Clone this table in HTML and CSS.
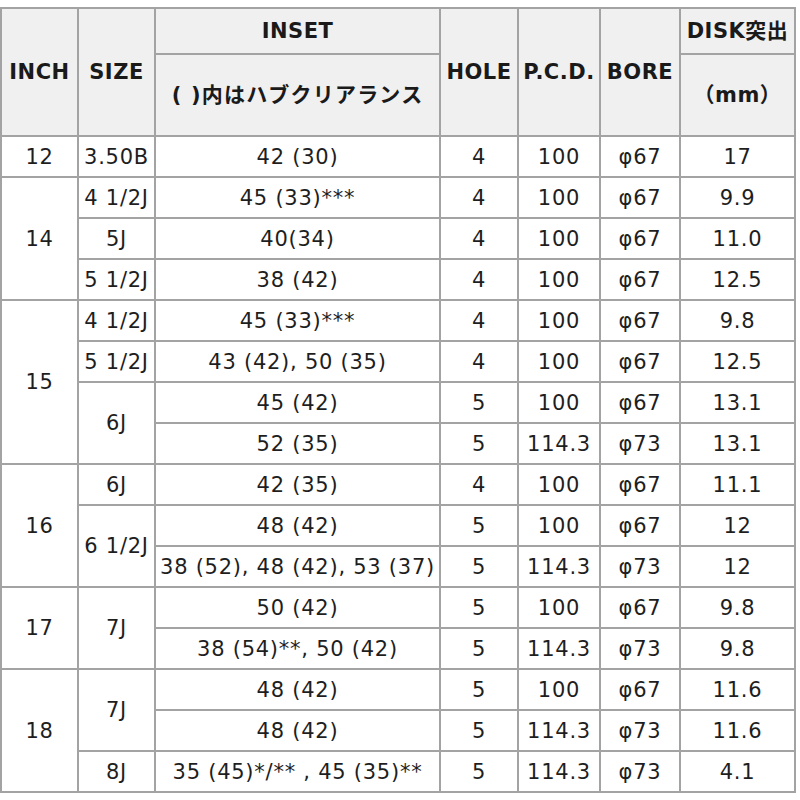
FILE: index.html
```html
<!DOCTYPE html>
<html lang="ja">
<head>
<meta charset="utf-8">
<title>Wheel size table</title>
<link rel="stylesheet" href="styles.css">
</head>
<body>
<table class="spec">
  <colgroup>
    <col class="c-inch"><col class="c-size"><col class="c-inset"><col class="c-hole"><col class="c-pcd"><col class="c-bore"><col class="c-disk">
  </colgroup>
  <thead>
    <tr class="h1">
      <th rowspan="2">INCH</th>
      <th rowspan="2">SIZE</th>
      <th>INSET</th>
      <th rowspan="2">HOLE</th>
      <th rowspan="2">P.C.D.</th>
      <th rowspan="2">BORE</th>
      <th>DISK突出</th>
    </tr>
    <tr class="h2">
      <th class="jp">( )内はハブクリアランス</th>
      <th>（mm）</th>
    </tr>
  </thead>
  <tbody>
    <tr class="grp"><td>12</td><td>3.50B</td><td>42 (30)</td><td>4</td><td>100</td><td>φ67</td><td>17</td></tr>

    <tr class="grp"><td rowspan="3">14</td><td>4 1/2J</td><td>45 (33)***</td><td>4</td><td>100</td><td>φ67</td><td>9.9</td></tr>
    <tr><td>5J</td><td>40(34)</td><td>4</td><td>100</td><td>φ67</td><td>11.0</td></tr>
    <tr><td>5 1/2J</td><td>38 (42)</td><td>4</td><td>100</td><td>φ67</td><td>12.5</td></tr>

    <tr class="grp"><td rowspan="4">15</td><td>4 1/2J</td><td>45 (33)***</td><td>4</td><td>100</td><td>φ67</td><td>9.8</td></tr>
    <tr><td>5 1/2J</td><td>43 (42), 50 (35)</td><td>4</td><td>100</td><td>φ67</td><td>12.5</td></tr>
    <tr><td rowspan="2">6J</td><td>45 (42)</td><td>5</td><td>100</td><td>φ67</td><td>13.1</td></tr>
    <tr><td>52 (35)</td><td>5</td><td>114.3</td><td>φ73</td><td>13.1</td></tr>

    <tr class="grp"><td rowspan="3">16</td><td>6J</td><td>42 (35)</td><td>4</td><td>100</td><td>φ67</td><td>11.1</td></tr>
    <tr><td rowspan="2">6 1/2J</td><td>48 (42)</td><td>5</td><td>100</td><td>φ67</td><td>12</td></tr>
    <tr><td>38 (52), 48 (42), 53 (37)</td><td>5</td><td>114.3</td><td>φ73</td><td>12</td></tr>

    <tr class="grp"><td rowspan="2">17</td><td rowspan="2">7J</td><td>50 (42)</td><td>5</td><td>100</td><td>φ67</td><td>9.8</td></tr>
    <tr><td>38 (54)**, 50 (42)</td><td>5</td><td>114.3</td><td>φ73</td><td>9.8</td></tr>

    <tr class="grp"><td rowspan="3">18</td><td rowspan="2">7J</td><td>48 (42)</td><td>5</td><td>100</td><td>φ67</td><td>11.6</td></tr>
    <tr><td>48 (42)</td><td>5</td><td>114.3</td><td>φ73</td><td>11.6</td></tr>
    <tr><td>8J</td><td>35 (45)*/** , 45 (35)**</td><td>5</td><td>114.3</td><td>φ73</td><td>4.1</td></tr>
  </tbody>
</table>
</body>
</html>
```

FILE: styles.css
```css
html, body {
  margin: 0;
  padding: 0;
  background: #ffffff;
}

body {
  padding-top: 7px;
  font-family: "DejaVu Sans", Verdana, "Noto Sans CJK JP", sans-serif;
  color: #1e1e1e;
}

.spec {
  border-collapse: collapse;
  table-layout: fixed;
  width: 796px;
  font-size: 21px;
}

.c-inch { width: 77px; }
.c-size { width: 77px; }
.c-inset { width: 285px; }
.c-hole { width: 78px; }
.c-pcd { width: 82px; }
.c-bore { width: 80px; }
.c-disk { width: 115px; }

.spec th,
.spec td {
  border: 2px solid #a3a3a3;
  padding: 0;
  text-align: center;
  vertical-align: middle;
  white-space: nowrap;
  overflow: visible;
  line-height: 24px;
}

.spec td {
  letter-spacing: 0.75px;
}

.spec th {
  background: #f0f0f0;
  font-weight: bold;
  color: #1a1a1a;
  letter-spacing: 0.5px;
}

.spec th.jp {
  letter-spacing: 1.2px;
}

.spec .h1 { height: 46px; }
.spec .h2 { height: 82px; }

.spec tbody tr { height: 41px; }
```
